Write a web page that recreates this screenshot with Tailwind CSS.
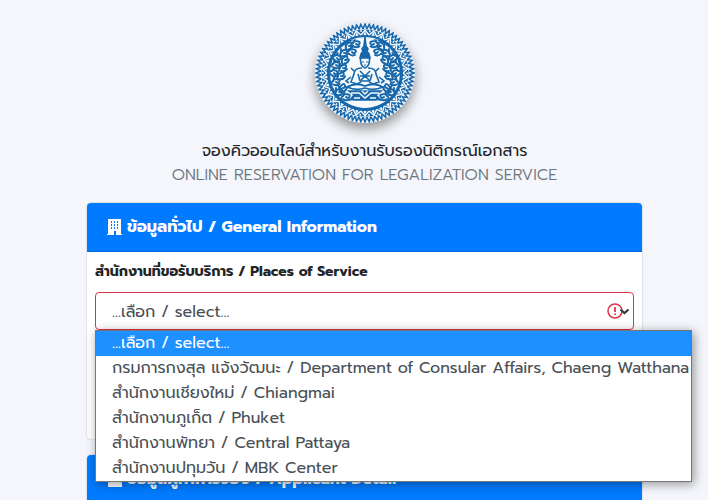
<!DOCTYPE html>
<html lang="th">

<head>
  <meta charset="UTF-8">
  <meta name="viewport" content="width=device-width, initial-scale=1">
  <title>Online Reservation for Legalization Service</title>
  <script src="https://cdn.jsdelivr.net/npm/@tailwindcss/browser@4"></script>
</head>

<body class="bg-[#f4f6fb] min-h-screen h-screen overflow-hidden pl-[87px] pr-[66px] pt-[23px] text-base text-[#212529] font-['Prompt','Inter','Noto_Sans_Thai',sans-serif]">

  <!-- Logo and title -->
  <header class="text-center">
    <svg id="seal" class="mx-auto size-[100px] rounded-full bg-[#eef3f9] shadow-[0_6px_12px_rgba(0,0,0,0.4)]" viewBox="-50 -50 100 100" role="img" aria-label="Ministry of Foreign Affairs seal">
      <g id="teeth" fill="none" stroke="#1767ab" stroke-width="1.5"></g>
      <circle r="43.5" fill="#1767ab" />
      <g id="petals" fill="none" stroke="#f3f8fc" stroke-width="1.4"></g>
      <circle r="37.5" fill="#1767ab" />
      <circle r="35" fill="#f6fafd" />
      <g id="flourish" fill="none" stroke="#1767ab" stroke-width="1.9" stroke-linecap="round"></g>
      <!-- Arcs above and below the figure -->
      <path d="M-15-33 Q0-39 15-33 Q0-36-15-33Z M-13 31 Q0 34 13 31 Q8 34.500 0 34.500 Q-8 34.500-13 31Z" fill="#f6fafd" />
      <path d="M0-30 L-6-22 -8-12 -16-5 -14 4 -20 11 -12 17 H12 L20 11 14 4 16-5 8-12 6-22Z" fill="#f6fafd" />
      <g fill="none" stroke="#1767ab" stroke-width="1.6">
        <path d="M0-36 L1-27 3-24 2-22 4-19 5-15 H-5 L-4-19 -2-22 -3-24 -1-27Z" fill="#1767ab" />
        <path d="M-4.500-15 Q-5-7 0-5 Q5-7 4.500-15" />
        <path d="M-3-11h2M1-11h2M-1-8h2" stroke-width="1" />
        <path d="M-3-5 Q-11-5-11 1 L-14 9 -8 11 -4 9 M3-5 Q11-5 11 1 L14 9 8 11 4 9" />
        <path d="M-7 1 L-5 8 M7 1 L5 8 M-5-2 L4 7 M5-2 L-4 7 M-5 3H5 M-5 8H5" />
        <path d="M-14 4 L-19 8 -16 10 M14 4 L19 8 16 10 M-11-2 L-14-5 M11-2 L14-5" />
        <path d="M-18 14 Q-9 9 0 13 Q9 9 18 14 Q9 18 0 15 Q-9 18-18 14Z" stroke-width="1.8" />
        <path d="M-16 18 H16 L11 22 15 27 H-15 L-11 22Z" fill="#1767ab" />
      </g>
      <path d="M-14 20 H-6 L0 25 6 20 H14 M-11 25 H-5 M5 25 H11 M-3 18 L0 21 3 18 M-14 28 Q0 32 14 28" fill="none" stroke="#f6fafd" stroke-width="1.4" />
    </svg>
    <h1 class="mt-4 leading-6">จองคิวออนไลน์สำหรับงานรับรองนิติกรณ์เอกสาร</h1>
    <p class="leading-6 font-light text-[#6c757d]">ONLINE RESERVATION FOR LEGALIZATION SERVICE</p>
  </header>

  <main class="mt-4 flex flex-col gap-4">
    <!-- General information -->
    <section class="rounded bg-white pb-[109px] shadow-[0_0_2px_rgba(0,0,0,0.25)]">
      <h2 class="flex items-center gap-1 rounded-t border-b border-[#0069d9] bg-[#007bff] px-5 py-3 leading-6 font-bold text-white">
        <svg class="w-4 h-4" viewBox="0 0 16 16" fill="currentColor" aria-hidden="true">
          <path fill-rule="evenodd" d="M1 0H14V15H15V16H9V12H7V16H0V15H1ZM4 2V4H5V2ZM7 2V4H8V2ZM10 2V4H11V2ZM4 5V7H5V5ZM7 5V7H8V5ZM10 5V7H11V5ZM4 8V10H5V8ZM7 8V10H8V8ZM10 8V10H11V8Z" />
        </svg>
        ข้อมูลทั่วไป / General Information
      </h2>
      <div class="px-2 pt-2">
        <label for="place" class="block mb-2 leading-6 text-sm font-bold">สำนักงานที่ขอรับบริการ / Places of Service</label>
        <div class="relative">
          <select id="place" class="block w-full h-[38px] appearance-none rounded border border-[#dc3545] bg-white px-4 pt-px text-[#495057]">
            <option>...เลือก / select...</option>
            <option>กรมการกงสุล แจ้งวัฒนะ / Department of Consular Affairs, Chaeng Watthana</option>
            <option>สำนักงานเชียงใหม่ / Chiangmai</option>
            <option>สำนักงานภูเก็ต / Phuket</option>
            <option>สำนักงานพัทยา / Central Pattaya</option>
            <option>สำนักงานปทุมวัน / MBK Center</option>
          </select>
          <svg class="absolute right-1 top-[11px] w-6 h-4 pointer-events-none" viewBox="0 0 24 16" fill="none" aria-hidden="true">
            <circle cx="9" cy="8" r="7" stroke="#dc3545" stroke-width="1.5" />
            <path d="M9 4V9M9 10.5V12" stroke="#dc3545" stroke-width="1.8" />
            <path d="M14.500 6.500L18.500 10L22.500 6.500" stroke="#343a40" stroke-width="2.200" />
          </svg>

          <!-- Open list -->
          <ul role="listbox" aria-label="Places of Service" class="absolute left-0 top-full z-10 w-[597px] border border-[#767676] bg-white text-[#495057] leading-[25px] whitespace-nowrap shadow-[2px_2px_10px_rgba(0,0,0,0.4)]">
            <li role="option" aria-selected="true" class="pl-4 bg-[#1e90ff] text-white">...เลือก / select...</li>
            <li role="option" class="pl-4">กรมการกงสุล แจ้งวัฒนะ / Department of Consular Affairs, Chaeng Watthana</li>
            <li role="option" class="pl-4">สำนักงานเชียงใหม่ / Chiangmai</li>
            <li role="option" class="pl-4">สำนักงานภูเก็ต / Phuket</li>
            <li role="option" class="pl-4">สำนักงานพัทยา / Central Pattaya</li>
            <li role="option" class="pl-4">สำนักงานปทุมวัน / MBK Center</li>
          </ul>
        </div>
      </div>
    </section>

    <!-- Applicant detail -->
    <section class="rounded bg-white shadow-[0_0_2px_rgba(0,0,0,0.25)]">
      <h2 class="flex items-center gap-1 rounded-t border-b border-[#0069d9] bg-[#007bff] px-5 py-3 leading-6 font-bold text-white">
        <svg class="w-4 h-4" viewBox="0 0 16 16" fill="currentColor" aria-hidden="true">
          <circle cx="8" cy="4" r="4" />
          <path d="M1 16V13Q1 9 5 9H11Q15 9 15 13V16Z" />
        </svg>
        ข้อมูลผู้ทำการจอง / Applicant Detail
      </h2>
    </section>
  </main>

  <script>
    const NS = 'http://www.w3.org/2000/svg';

    function addPath(groupId, d, transform) {
      const path = document.createElementNS(NS, 'path');
      path.setAttribute('d', d);
      path.setAttribute('transform', transform);
      document.getElementById(groupId).appendChild(path);
    }

    // Outer teeth and the petal ring
    for (let i = 0; i < 72; i++) {
      addPath('teeth', 'M-2-44 L0-49 L2-44', `rotate(${i * 5})`);
    }
    for (let i = 0; i < 30; i++) {
      addPath('petals', 'M-4-38 L0-43 L4-38 M-1-38 L0-40 L1-38 M-4-43 L-4-41', `rotate(${i * 12})`);
    }

    // Flame scrolls, the right half mirrors the left
    const scrolls = [[-9, -29, 20], [-16, -27, -20], [-13, -21, 30], [-21, -20, 0], [-28, -15, 45], [-20, -13, -20],
      [-29, -8, 20], [-22, -5, 0], [-31, 0, 40], [-24, 3, -10], [-29, 9, 15], [-22, 15, -30], [-26, 19, 0], [-19, 24, 20]];
    scrolls.forEach(([x, y, angle]) => {
      const d = 'M-4 3 Q-4-2 0-3 Q4-4 3-1 Q2 1 0 0 M-2 3 Q2 4 4 1 M-3 0 L-3-4';
      addPath('flourish', d, `translate(${x} ${y}) rotate(${angle})`);
      addPath('flourish', d, `scale(-1 1) translate(${x} ${y}) rotate(${angle})`);
    });
  </script>
</body>

</html>
